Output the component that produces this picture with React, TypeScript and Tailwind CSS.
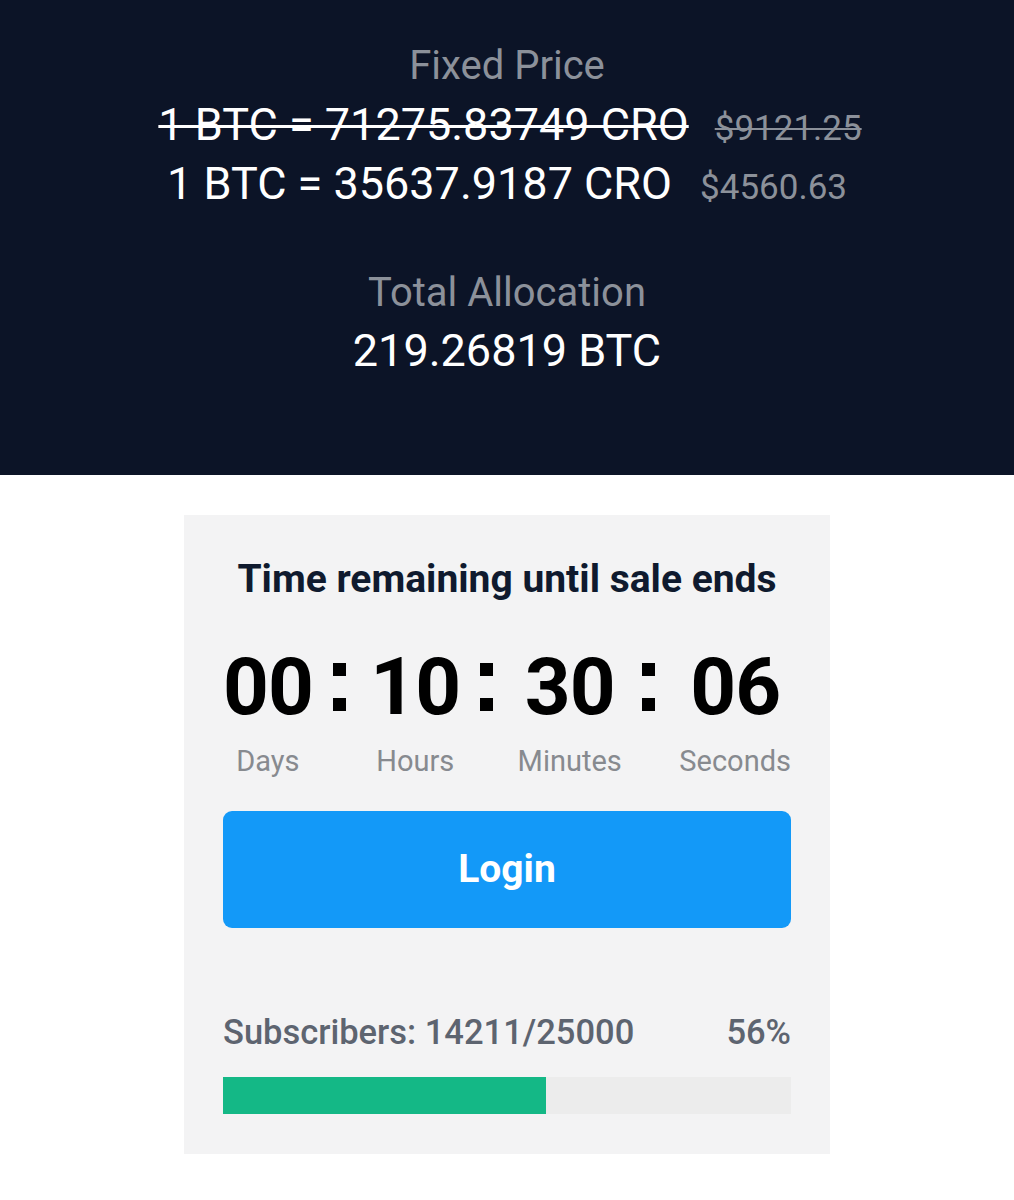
const font = { fontFamily: "Roboto, 'Noto Sans', sans-serif" };

const units = [
  { value: "00", label: "Days" },
  { value: "10", label: "Hours" },
  { value: "30", label: "Minutes" },
  { value: "06", label: "Seconds" },
];

function Countdown() {
  return (
    <div className="mt-[44px] flex items-start justify-between">
      {units.map((u, i) => (
        <div key={u.label} className="flex items-start">
          <div className="flex flex-col items-center">
            <span className="text-[80px] font-bold leading-[80px] tracking-[-1px] text-black">
              {u.value}
            </span>
            <span className="mt-[14px] text-[29px] leading-[40px] text-[#878a8f]">
              {u.label}
            </span>
          </div>
          {i < units.length - 1 && (
            <span className="ml-[20px] flex h-[80px] flex-col justify-center gap-[22px]">
              <span className="block h-[13px] w-[13px] bg-black" />
              <span className="block h-[13px] w-[13px] bg-black" />
            </span>
          )}
        </div>
      ))}
    </div>
  );
}

export default function App() {
  const pct = 14211 / 25000;
  return (
    <div className="min-h-[1200px] w-[1014px] bg-white" style={font}>
      <section className="flex h-[475px] flex-col items-center bg-[#0c1427] pt-[42px]">
        <p className="text-[40px] leading-[48px] text-[#8c919a]">Fixed Price</p>
        <div className="mt-[7px] flex items-baseline gap-[26px] pl-[6px]">
          <span className="text-[45px] leading-[56px] text-white line-through decoration-[3px]">
            1 BTC = 71275.83749 CRO
          </span>
          <span className="text-[35px] leading-[56px] text-[#8c919a] line-through decoration-[2px]">
            $9121.25
          </span>
        </div>
        <div className="-mt-px flex items-baseline gap-[28px]">
          <span className="text-[45px] leading-[56px] text-white">1 BTC = 35637.9187 CRO</span>
          <span className="text-[35px] leading-[56px] text-[#8c919a]">$4560.63</span>
        </div>
        <p className="mt-[53px] text-[40px] leading-[48px] text-[#8c919a]">Total Allocation</p>
        <p className="mt-[6px] text-[45px] leading-[56px] text-white">219.26819 BTC</p>
      </section>

      <section className="flex justify-center pt-[40px]">
        <div className="w-[646px] bg-[#f3f3f4] px-[39px] pb-[40px] pt-[40px]">
          <h2 className="text-center text-[39px] font-bold leading-[48px] text-[#0f1a2e]">
            Time remaining until sale ends
          </h2>
          <Countdown />
          <button className="mt-[30px] flex h-[117px] w-full items-center justify-center rounded-[9px] bg-[#1399f8] text-[39px] font-bold text-white">
            Login
          </button>
          <div className="mt-[82px] flex items-center justify-between text-[34.5px] font-medium leading-[44px] text-[#5d6470]">
            <span>Subscribers: 14211/25000</span>
            <span>56%</span>
          </div>
          <div className="mt-[23px] h-[37px] w-full bg-[#ececec]">
            <div className="h-full bg-[#14b886]" style={{ width: `${pct * 100}%` }} />
          </div>
        </div>
      </section>
    </div>
  );
}
